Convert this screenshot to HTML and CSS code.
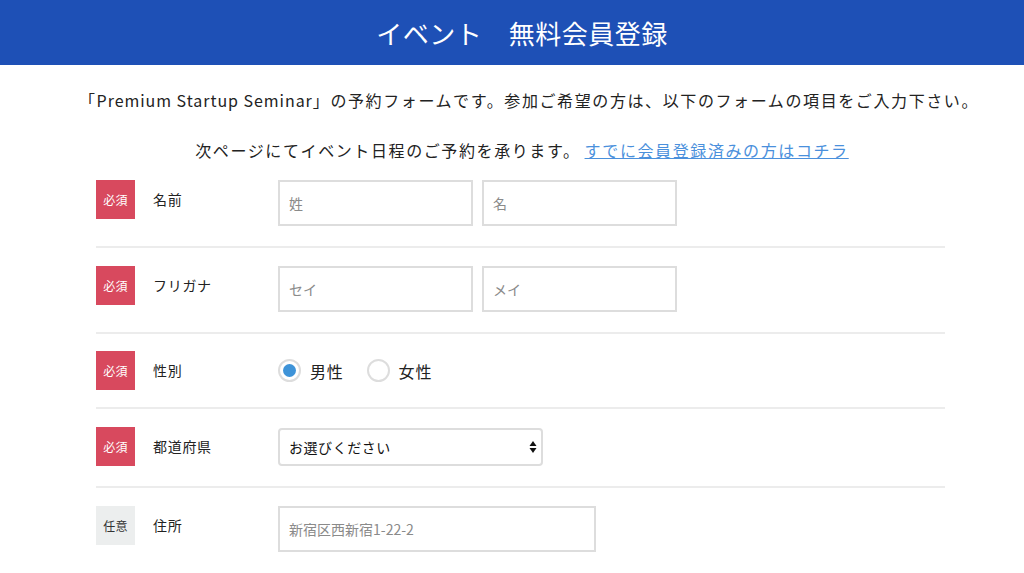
FILE: index.html
```html
<!DOCTYPE html>
<html lang="ja">
<head>
<meta charset="utf-8">
<title>イベント 無料会員登録</title>
<link rel="stylesheet" href="styles.css">
</head>
<body>
<header class="site-header">
  <h1 class="site-title">イベント　無料会員登録</h1>
</header>
<main class="page">
  <p class="lead">「<span class="lead-latin">Premium Startup Seminar</span>」の予約フォームです。参加ご希望の方は、以下のフォームの項目をご入力下さい。</p>
  <p class="lead lead-second">次ページにてイベント日程のご予約を承ります。<a class="lead-link" href="#">すでに会員登録済みの方はコチラ</a></p>

  <form class="form">
    <div class="row">
      <span class="badge badge-required">必須</span>
      <span class="label">名前</span>
      <div class="controls">
        <input class="text-input text-half" type="text" placeholder="姓">
        <input class="text-input text-half" type="text" placeholder="名">
      </div>
    </div>
    <div class="row">
      <span class="badge badge-required">必須</span>
      <span class="label">フリガナ</span>
      <div class="controls">
        <input class="text-input text-half" type="text" placeholder="セイ">
        <input class="text-input text-half" type="text" placeholder="メイ">
      </div>
    </div>
    <div class="row row-compact">
      <span class="badge badge-required">必須</span>
      <span class="label">性別</span>
      <div class="controls radios">
        <label class="radio"><span class="radio-circle radio-checked"></span><span class="radio-text">男性</span></label>
        <label class="radio"><span class="radio-circle"></span><span class="radio-text">女性</span></label>
      </div>
    </div>
    <div class="row">
      <span class="badge badge-required">必須</span>
      <span class="label">都道府県</span>
      <div class="controls">
        <div class="select-wrap">
          <select class="select">
            <option>お選びください</option>
          </select>
          <svg class="select-arrows" width="8" height="14" viewBox="0 0 8 14"><path d="M4 1 L7.5 6 H0.5 Z" fill="#111"/><path d="M4 13 L7.5 8 H0.5 Z" fill="#111"/></svg>
        </div>
      </div>
    </div>
    <div class="row row-last">
      <span class="badge badge-optional">任意</span>
      <span class="label">住所</span>
      <div class="controls">
        <input class="text-input text-wide" type="text" placeholder="新宿区西新宿1-22-2">
      </div>
    </div>
  </form>
</main>
</body>
</html>
```

FILE: styles.css
```css
* {
  box-sizing: border-box;
}

html, body {
  margin: 0;
  padding: 0;
  background: #ffffff;
}

body {
  font-family: "Noto Sans CJK JP", "Noto Sans", sans-serif;
  color: #222222;
}

.site-header {
  height: 65px;
  background: #1e50b6;
  display: flex;
  align-items: center;
  justify-content: center;
}

.site-title {
  margin: 0;
  color: #ffffff;
  font-size: 26px;
  font-weight: 400;
  line-height: 1;
  letter-spacing: 0.02em;
  padding-left: 20px;
}

.page {
  padding: 0 79px 0 96px;
}

.lead {
  margin: 23px -96px 0 -79px;
  text-align: center;
  font-size: 16px;
  line-height: 24px;
  letter-spacing: 0.1em;
  color: #222;
}

.lead-latin {
  letter-spacing: 0.06em;
}

.lead-second {
  margin-top: 26px;
  padding-right: 14px;
}

.lead-link {
  color: #4a90dc;
  text-decoration: underline;
  margin-left: 4px;
}

.form {
  display: flex;
  flex-direction: column;
}

.row {
  display: flex;
  align-items: flex-start;
  padding: 18px 0 20px;
  border-bottom: 2px solid #ececec;
}

.row-compact {
  padding: 17px 0 17px;
}

.row-last {
  border-bottom: none;
}

.badge {
  width: 39px;
  height: 39px;
  flex: none;
  display: flex;
  align-items: center;
  justify-content: center;
  font-size: 12px;
  letter-spacing: 0.02em;
}

.badge-required {
  background: #d8495e;
  color: #ffffff;
}

.badge-optional {
  background: #eceeee;
  color: #333333;
}

.label {
  width: 125px;
  margin-left: 18px;
  flex: none;
  font-size: 14px;
  line-height: 38px;
  letter-spacing: 0.05em;
  color: #222;
}

.controls {
  display: flex;
  gap: 9px;
  align-items: flex-start;
}

.text-input {
  height: 46px;
  border: 2px solid #dddddd;
  border-radius: 0;
  padding: 0 9px;
  font-family: inherit;
  font-size: 14px;
  color: #222;
  background: #fff;
  outline: none;
}

.text-input::placeholder {
  color: #8a8a8a;
}

.text-half {
  width: 195px;
}

.text-wide {
  width: 318px;
  height: 46px;
}

.radios {
  gap: 0;
  height: 39px;
  align-items: center;
}

.radio {
  display: flex;
  align-items: center;
  margin-right: 23px;
}

.radio-circle {
  width: 23px;
  height: 23px;
  border: 2px solid #dddddd;
  border-radius: 50%;
  display: flex;
  align-items: center;
  justify-content: center;
  background: #fff;
}

.radio-checked::after {
  content: "";
  width: 13px;
  height: 13px;
  border-radius: 50%;
  background: #3e93d8;
}

.radio-text {
  margin-left: 9px;
  font-size: 16px;
  letter-spacing: 0.05em;
  color: #222;
}

.select-wrap {
  position: relative;
  margin-top: 1px;
}

.select {
  appearance: none;
  -webkit-appearance: none;
  width: 265px;
  height: 38px;
  border: 2px solid #dddddd;
  border-radius: 4px;
  background: #fff;
  padding: 0 9px;
  font-family: inherit;
  font-size: 14px;
  letter-spacing: 0.04em;
  color: #111;
  outline: none;
}

.select-arrows {
  position: absolute;
  right: 6px;
  top: 12px;
  pointer-events: none;
}
```
